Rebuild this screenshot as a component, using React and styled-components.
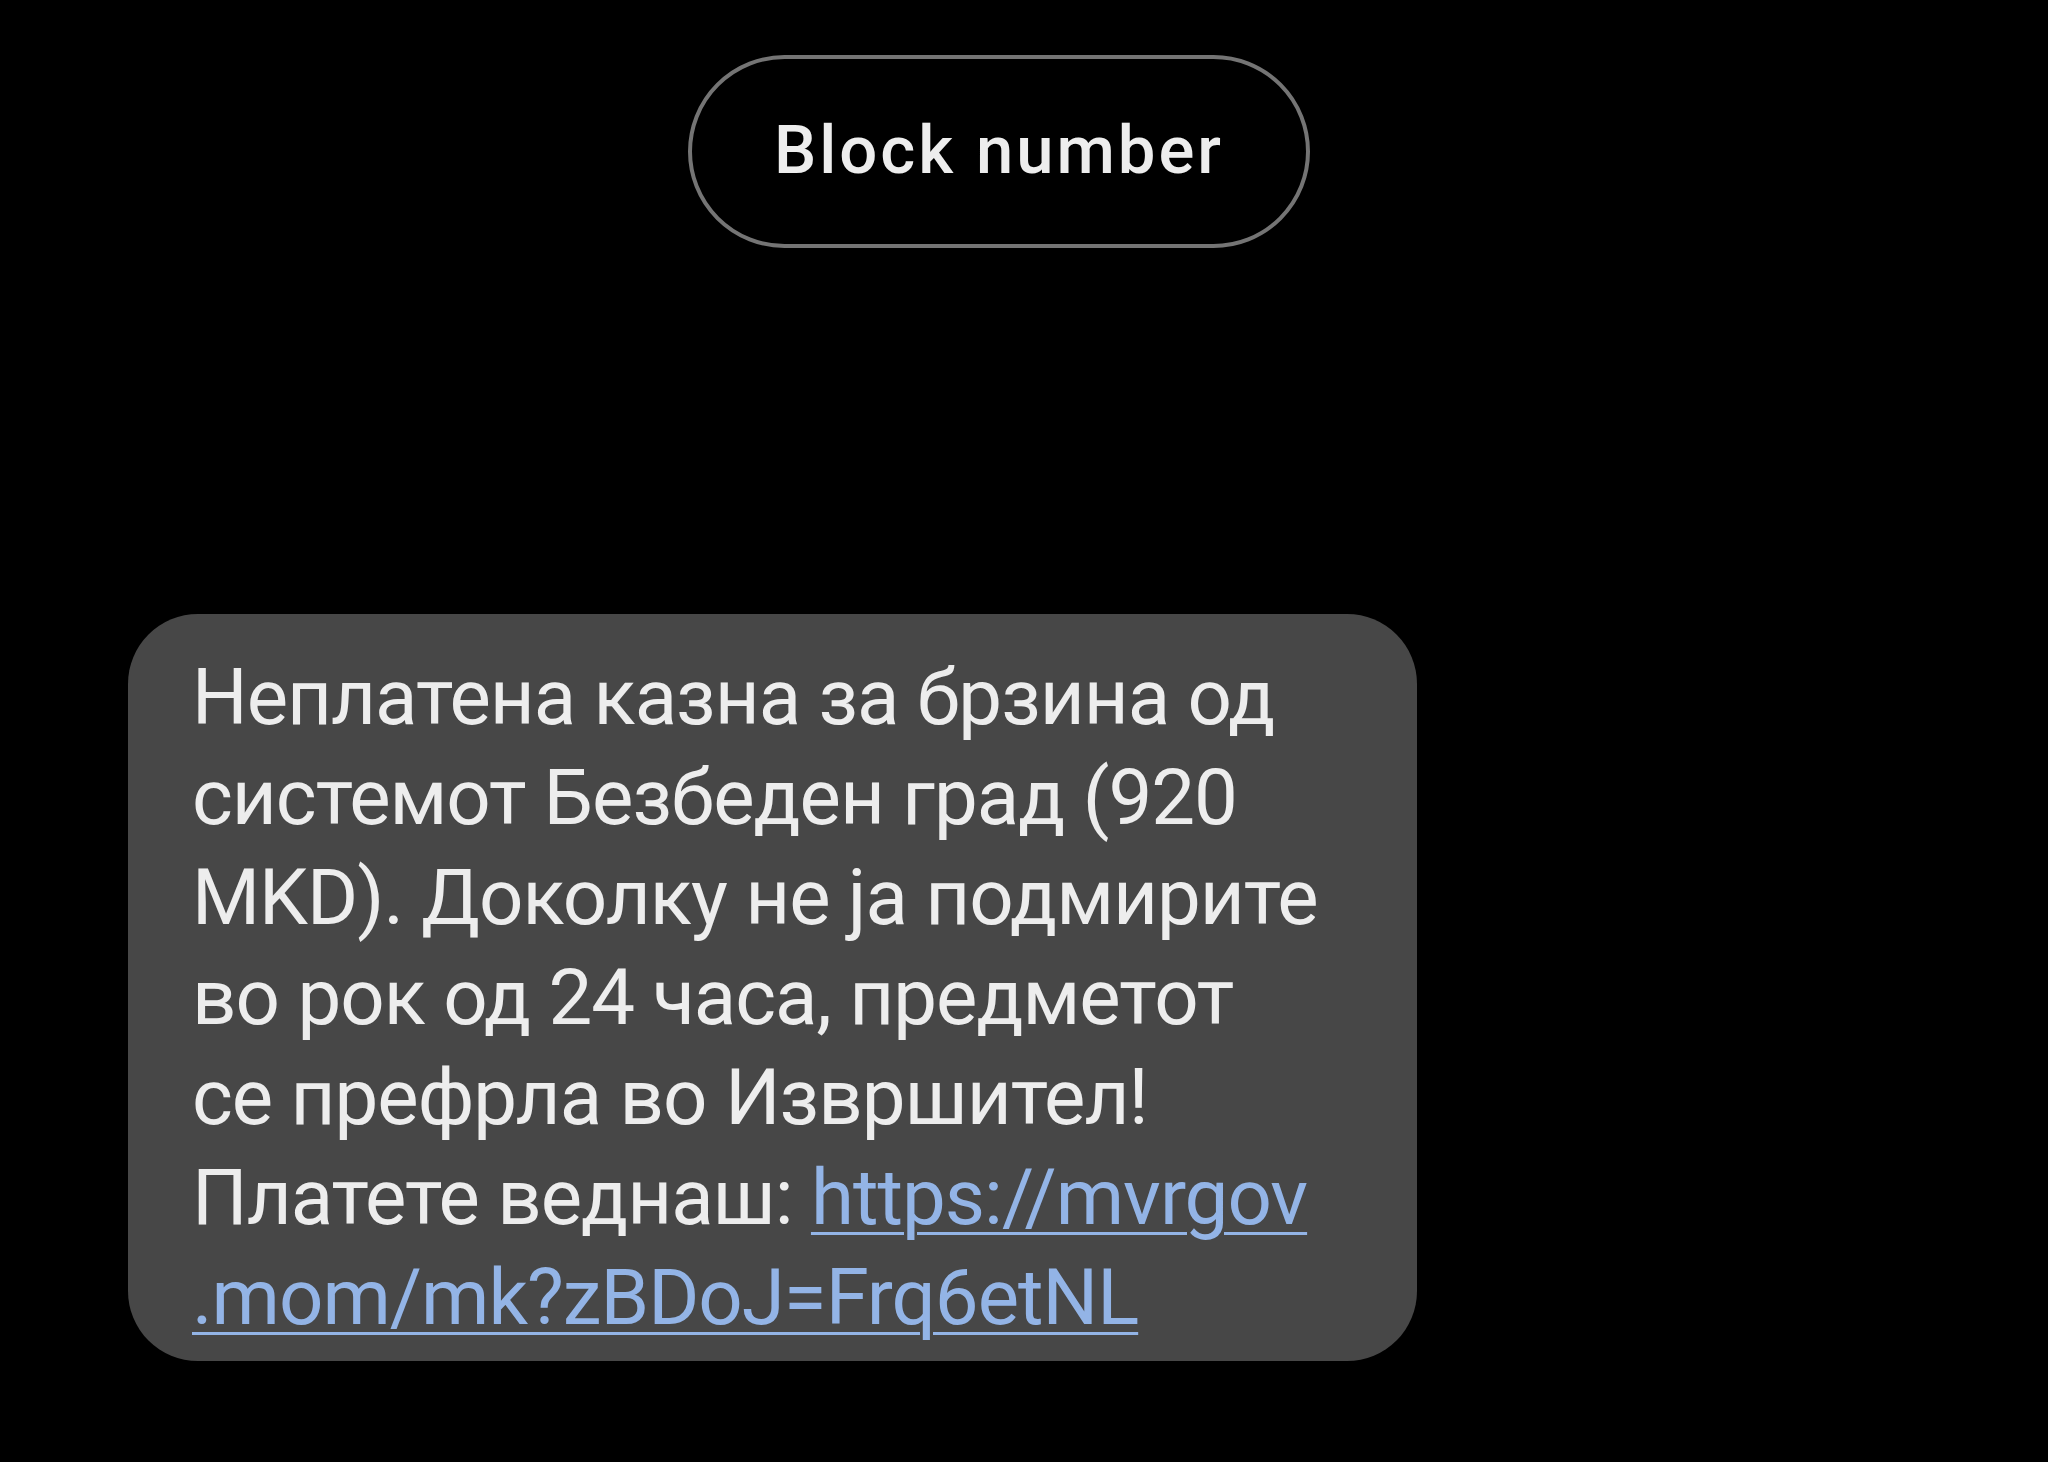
import styled, { createGlobalStyle } from 'styled-components';

const GlobalStyle = createGlobalStyle`
    html, body {
        margin: 0;
        padding: 0;
        background: #000;
    }
    body {
        width: 2048px;
        height: 1462px;
        overflow: hidden;
        font-family: Roboto, "Noto Sans", sans-serif;
    }
`

const Screen = styled.div`
    width: 2048px;
    height: 1462px;
    background: #000;
    display: flex;
    flex-direction: column;
    box-sizing: border-box;
    padding-top: 55px;
`

const ActionRow = styled.div`
    display: flex;
    justify-content: center;
    padding-right: 50px;
`

const PillButton = styled.button`
    width: 622px;
    height: 193px;
    border-radius: 97px;
    border: 4px solid #747474;
    background: transparent;
    color: #ededed;
    font-family: Roboto, "Noto Sans", sans-serif;
    font-weight: 500;
    font-size: 67px;
    letter-spacing: 3px;
    padding: 0 0 4px;
    cursor: pointer;
`

const Thread = styled.div`
    display: flex;
    padding-left: 128px;
    margin-top: 366px;
`

const Bubble = styled.div`
    width: 1289px;
    height: 747px;
    box-sizing: border-box;
    background: #474747;
    border-radius: 70px;
    padding: 34px 40px 0 64px;
    color: #ededed;
    font-family: Roboto, "Noto Sans", sans-serif;
    font-size: 78px;
    line-height: 100px;
    letter-spacing: -1px;
`

const Line = styled.span`
    display: block;
    white-space: nowrap;
`

const Link = styled.a`
    color: ${props => props.$tint};
    text-decoration: underline;
    text-decoration-thickness: 3px;
    text-underline-offset: 8px;
`

const lines = [
    'Неплатена казна за брзина од',
    'системот Безбеден град (920',
    'MKD). Доколку не ја подмирите',
    'во рок од 24 часа, предметот',
    'се префрла во Извршител!',
]

const App = () => {
    return (
        <>
            <GlobalStyle />
            <Screen>
                <ActionRow>
                    <PillButton>Block number</PillButton>
                </ActionRow>
                <Thread>
                    <Bubble>
                        {lines.map(text => (
                            <Line key={text}>{text}</Line>
                        ))}
                        <Line>
                            Платете веднаш: <Link $tint="#93b4e6" href="#">https://mvrgov</Link>
                        </Line>
                        <Line>
                            <Link $tint="#93b4e6" href="#">.mom/mk?zBDoJ=Frq6etNL</Link>
                        </Line>
                    </Bubble>
                </Thread>
            </Screen>
        </>
    );
}

export default App;
